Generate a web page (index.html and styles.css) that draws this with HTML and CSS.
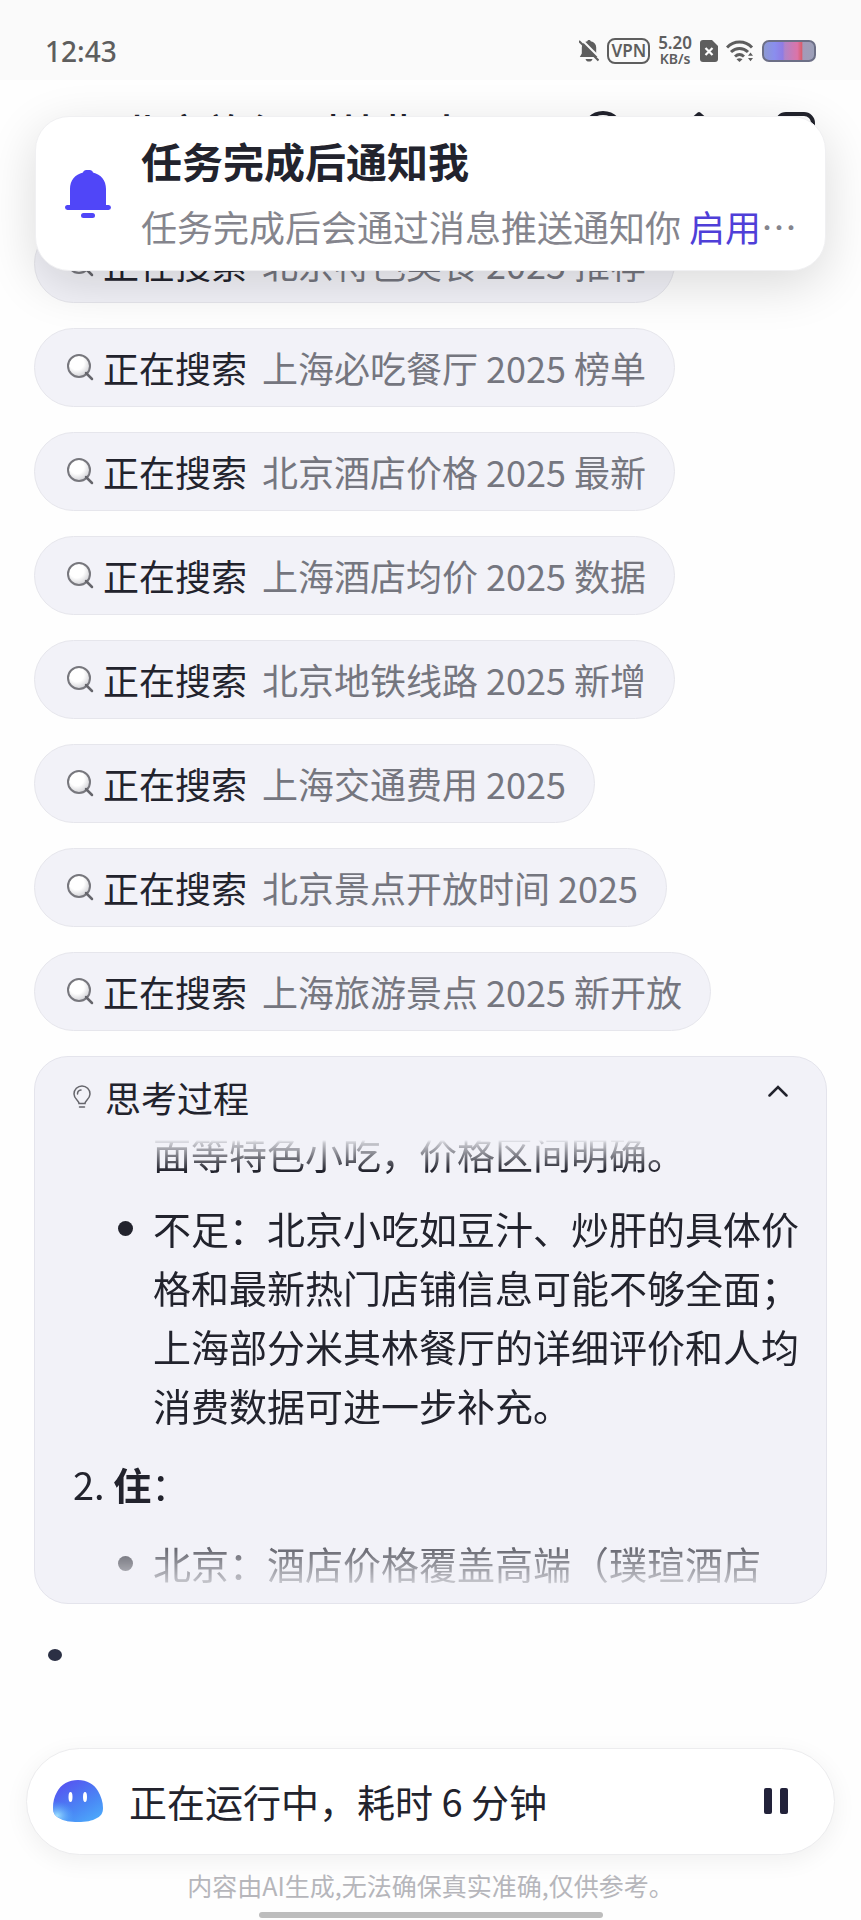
FILE: index.html
```
<!DOCTYPE html>
<html lang="zh-CN">
<head>
    <meta charset="UTF-8">
    <meta name="viewport" content="width=device-width, initial-scale=1.0">
    <title>北京旅行 对比指南</title>
    <link rel="stylesheet" href="styles.css">
</head>
<body>

<!-- shared icon and gradients -->
<svg class="sprite" aria-hidden="true">
    <defs>
        <radialGradient id="lens" cx="0.4" cy="0.35" r="0.65">
            <stop offset="0.5" stop-color="#ffffff"/>
            <stop offset="1" stop-color="#d2d2d6"/>
        </radialGradient>
        <linearGradient id="battery" x1="0" x2="1" y1="0" y2="0">
            <stop offset="0" stop-color="#8c9ad0"/>
            <stop offset="0.22" stop-color="#8a8eee"/>
            <stop offset="0.38" stop-color="#8f7ce4"/>
            <stop offset="0.42" stop-color="#b083c8"/>
            <stop offset="0.66" stop-color="#dc74a8"/>
            <stop offset="0.74" stop-color="#d85f70"/>
            <stop offset="0.77" stop-color="#a59ab8"/>
            <stop offset="1" stop-color="#9aa0b8"/>
        </linearGradient>
        <linearGradient id="face" x1="0" x2="0.7" y1="0" y2="1">
            <stop offset="0" stop-color="#5a48f0"/>
            <stop offset="0.35" stop-color="#5068f2"/>
            <stop offset="0.7" stop-color="#4a88f5"/>
            <stop offset="1" stop-color="#4ca4fa"/>
        </linearGradient>
        <radialGradient id="glow" cx="0.08" cy="0.85" r="0.35">
            <stop offset="0" stop-color="#9fe0ff"/>
            <stop offset="1" stop-color="#4aa8fa" stop-opacity="0"/>
        </radialGradient>
    </defs>
    <symbol id="icon-search" viewBox="0 0 28 28">
        <circle cx="13" cy="13" r="11" fill="url(#lens)" stroke="#77777d" stroke-width="2"/>
        <path d="M20 20l6 6" stroke="#66666c" stroke-width="2.5" stroke-linecap="round"/>
    </symbol>
</svg>

<div class="status-bar">
    <span class="clock">12:43</span>
    <div class="status-icons">
        <svg width="20" height="24" viewBox="0 0 20 24">
            <path d="M10 1c.9 0 1.500.5 1.700 1.200 3.500.7 5.500 3.100 5.500 6.300v6l2 3.500H.8l2-3.500v-6c0-3.200 2-5.600 5.500-6.300C8.500 1.500 9.100 1 10 1zM6.500 20h7c-.4 1.700-1.700 2.600-3.500 2.600S6.900 21.700 6.500 20z" fill="#5e5e5e"/>
            <path d="M2 0l20 20" stroke="#fafafa" stroke-width="2"/>
            <path d="M0 2l19.500 19.500" stroke="#5e5e5e" stroke-width="2"/>
        </svg>
        <span class="vpn">VPN</span>
        <span class="speed"><b>5.20</b><small>KB/s</small></span>
        <svg width="18" height="22" viewBox="0 0 18 22">
            <path d="M3 0h9l6 6v13a3 3 0 0 1-3 3H3a3 3 0 0 1-3-3V3a3 3 0 0 1 3-3z" fill="#5e5e5e"/>
            <path d="M5.500 8l7 7m0-7l-7 7" stroke="#fff" stroke-width="2.200"/>
        </svg>
        <svg width="28" height="22" viewBox="0 0 28 22">
            <g fill="none" stroke="#5e5e5e" stroke-width="3">
                <path d="M1 7.500C8 .2 19 .2 26 7.500"/>
                <path d="M5 12c5-4.800 12-4.800 17 0"/>
                <path d="M9 16.500c2.800-2.500 6.200-2.500 9 0"/>
            </g>
            <path d="M10.500 19.200q3-1.800 6 0L13.500 22zM22 15.800l2.500-3.300 2.500 3.300zM22 18l2.500 3.300L27 18z" fill="#5e5e5e"/>
        </svg>
        <svg width="54" height="22" viewBox="0 0 54 22">
            <rect x="1" y="1" width="52" height="20" rx="6" fill="url(#battery)" stroke="#6c6f86" stroke-width="2"/>
        </svg>
    </div>
</div>

<header class="header">
    <h1 class="header-title">北京旅行 对比指南</h1>
    <div class="header-icons">
        <svg width="44" height="44" viewBox="0 0 44 44" fill="none" stroke="#22232d" stroke-width="4">
            <circle cx="22" cy="22" r="19"/>
            <path d="M22 12v11l7 4"/>
        </svg>
        <svg width="44" height="44" viewBox="0 0 44 44" fill="none" stroke="#22232d" stroke-width="4" stroke-linecap="round" stroke-linejoin="round">
            <path d="M14 11l8-7 8 7M22 5v23M6 24v14h32V24"/>
        </svg>
        <svg width="44" height="44" viewBox="0 0 44 44" fill="none" stroke="#22232d" stroke-width="4">
            <rect x="4" y="4" width="36" height="35" rx="9"/>
            <path d="M14 12v20"/>
        </svg>
    </div>
</header>

<div class="toast">
    <svg class="toast-icon" width="46" height="50" viewBox="0 0 46 50" fill="#5046f8">
        <path d="M18 3.500C18.500 1.500 20 1 23 1s4.500.5 5 2.500C36 5.500 41 11.500 41 20v16h2.500a2.300 2.300 0 0 1 0 5h-41a2.300 2.300 0 0 1 0-5H5V20C5 11.500 10 5.500 18 3.500z"/>
        <rect x="16" y="44" width="14" height="5" rx="2.500"/>
    </svg>
    <div class="toast-text">
        <strong>任务完成后通知我</strong>
        <p>任务完成后会通过消息推送通知你 <a href="#">启用</a>…</p>
    </div>
</div>

<main class="content">
    <ul class="searches">
        <li><svg width="28" height="28"><use href="#icon-search"/></svg><span>正在搜索</span><em>北京特色美食 2025 推荐</em></li>
        <li><svg width="28" height="28"><use href="#icon-search"/></svg><span>正在搜索</span><em>上海必吃餐厅 2025 榜单</em></li>
        <li><svg width="28" height="28"><use href="#icon-search"/></svg><span>正在搜索</span><em>北京酒店价格 2025 最新</em></li>
        <li><svg width="28" height="28"><use href="#icon-search"/></svg><span>正在搜索</span><em>上海酒店均价 2025 数据</em></li>
        <li><svg width="28" height="28"><use href="#icon-search"/></svg><span>正在搜索</span><em>北京地铁线路 2025 新增</em></li>
        <li><svg width="28" height="28"><use href="#icon-search"/></svg><span>正在搜索</span><em>上海交通费用 2025</em></li>
        <li><svg width="28" height="28"><use href="#icon-search"/></svg><span>正在搜索</span><em>北京景点开放时间 2025</em></li>
        <li><svg width="28" height="28"><use href="#icon-search"/></svg><span>正在搜索</span><em>上海旅游景点 2025 新开放</em></li>
    </ul>

    <section class="thinking">
        <div class="thinking-head">
            <svg width="18" height="24" viewBox="0 0 18 24" fill="none" stroke="#66666c" stroke-width="1.500" stroke-linecap="round">
                <path d="M6 18.500c0-3-5-4.500-5-9.500a8 8 0 0 1 16 0c0 5-5 6.500-5 9.500zM6.500 22h5M4.500 9A4 4 0 0 1 8 5"/>
            </svg>
            <h2>思考过程</h2>
            <button class="collapse" aria-label="收起">
                <svg width="20" height="12" viewBox="0 0 20 12" fill="none" stroke="#22232d" stroke-width="2.500" stroke-linecap="round">
                    <path d="M1.500 10.500L10 2l8.500 8.500"/>
                </svg>
            </button>
        </div>
        <div class="thinking-body">
            <ul>
                <li class="rest"><span>面等特色小吃，价格区间明确。</span></li>
                <li><span>不足：北京小吃如豆汁、炒肝的具体价格和最新热门店铺信息可能不够全面；上海部分米其林餐厅的详细评价和人均消费数据可进一步补充。</span></li>
            </ul>
            <ol start="2">
                <li><strong>住</strong>：</li>
            </ol>
            <ul>
                <li><span>北京：酒店价格覆盖高端（璞瑄酒店</span></li>
            </ul>
        </div>
    </section>

    <div class="typing"></div>
</main>

<footer class="footer">
    <div class="runner">
        <svg width="50" height="44" viewBox="0 0 50 44">
            <path d="M25 1c9 0 16 4 20 11 3 5 5 11 5 17 0 5-2 8-6 10-5 3-11 4-19 4s-14-1-19-4c-4-2-6-5-6-10 0-6 1-11 4-16C8 5 16 1 25 1z" fill="url(#face)"/>
            <path d="M25 1c9 0 16 4 20 11 3 5 5 11 5 17 0 5-2 8-6 10-5 3-11 4-19 4s-14-1-19-4c-4-2-6-5-6-10 0-6 1-11 4-16C8 5 16 1 25 1z" fill="url(#glow)"/>
            <ellipse cx="17.500" cy="18" rx="2" ry="5" fill="#fff"/>
            <ellipse cx="32" cy="18" rx="2" ry="5" fill="#fff"/>
        </svg>
        <span class="runner-text">正在运行中，耗时 6 分钟</span>
        <button class="pause" aria-label="暂停">
            <svg width="24" height="26" viewBox="0 0 24 26" fill="#22223a">
                <rect x="0" y="0" width="8" height="26" rx="2"/>
                <rect x="16" y="0" width="8" height="26" rx="2"/>
            </svg>
        </button>
    </div>
    <p class="disclaimer">内容由AI生成,无法确保真实准确,仅供参考。</p>
    <div class="home-bar"></div>
</footer>

</body>
</html>
```

FILE: styles.css
```
* {
    box-sizing: border-box;
    margin: 0;
    padding: 0;
}
body {
    position: relative;
    display: flex;
    flex-direction: column;
    min-height: 100vh;
    font-family: "Noto Sans CJK SC", "Noto Sans", sans-serif;
    color: #22232d;
    background-color: #fefefe;
}
ul, ol {
    list-style: none;
}
button {
    border: none;
    background: none;
    cursor: pointer;
}
svg {
    display: block;
    flex-shrink: 0;
}
.sprite {
    position: absolute;
    width: 0;
    height: 0;
}

/* status */
.status-bar {
    display: flex;
    align-items: center;
    justify-content: space-between;
    height: 80px;
    padding: 22px 45px 0 45px;
    font-family: "Noto Sans", sans-serif;
    color: #5e5e5e;
    background-color: #fafafa;
}
.clock {
    font-size: 28px;
    line-height: 40px;
    font-weight: 500;
}
.status-icons {
    display: flex;
    align-items: center;
    gap: 8px;
}
.vpn {
    padding: 0 2px;
    border: 2px solid #5e5e5e;
    border-radius: 8px;
    font-size: 17px;
    line-height: 22px;
    font-weight: 600;
}
.speed {
    display: flex;
    flex-direction: column;
    align-items: center;
    font-size: 17px;
    line-height: 16px;
}
.speed b {
    font-weight: 600;
}
.speed small {
    font-size: 14px;
    font-weight: 600;
}

/* header */
.header {
    display: flex;
    align-items: center;
    justify-content: space-between;
    height: 104px;
    padding: 0 44px 0 122px;
}
.header-title {
    font-size: 42px;
    line-height: 60px;
    font-weight: 500;
}
.header-icons {
    display: flex;
    gap: 52px;
}

/* toast */
.toast {
    position: absolute;
    top: 116px;
    left: 35px;
    right: 35px;
    z-index: 2;
    display: flex;
    align-items: center;
    gap: 30px;
    height: 155px;
    padding: 0 29px;
    border: 1px solid #f0f0f2;
    border-radius: 34px;
    background-color: #fff;
    box-shadow: 0 14px 50px rgba(0, 0, 0, 0.14);
}
.toast-text {
    flex: 1;
    white-space: nowrap;
}
.toast-text strong {
    display: block;
    font-size: 41px;
    line-height: 60px;
}
.toast-text p {
    padding-top: 4px;
    font-size: 36px;
    line-height: 64px;
    color: #85858d;
}
.toast-text a {
    color: #4f3fd8;
    text-decoration: none;
}

/* list */
.content {
    flex: 1;
    padding: 40px 34px 0;
}
.searches {
    display: flex;
    flex-direction: column;
    align-items: flex-start;
    gap: 25px;
}
.searches li {
    display: flex;
    align-items: center;
    height: 79px;
    padding: 0 28px 2px 31px;
    border: 1px solid #e6e6ec;
    border-radius: 40px;
    background-color: #f2f2f8;
    font-size: 36px;
    line-height: 52px;
}
.searches span {
    margin: 0 15px 0 9px;
}
.searches em {
    font-style: normal;
    color: #75767f;
}

/* thinking */
.thinking {
    margin-top: 25px;
    padding-bottom: 19px;
    border: 1px solid #e4e4ec;
    border-radius: 34px;
    background-color: #f2f2f8;
}
.thinking-head {
    display: flex;
    align-items: center;
    gap: 14px;
    height: 66px;
    padding: 14px 38px 0;
}
.thinking-head h2 {
    flex: 1;
    font-size: 36px;
    line-height: 52px;
    font-weight: 400;
}
.collapse {
    padding-bottom: 12px;
}
.thinking-body {
    height: 461px;
    overflow: hidden;
    padding: 0 22px 0 38px;
    font-size: 38px;
    line-height: 59px;
    -webkit-mask-image: linear-gradient(transparent 17px, rgba(0, 0, 0, 0.2) 20px, #000 48px, #000 400px, rgba(0, 0, 0, 0.2) 461px);
    mask-image: linear-gradient(transparent 17px, rgba(0, 0, 0, 0.2) 20px, #000 48px, #000 400px, rgba(0, 0, 0, 0.2) 461px);
}
.thinking-body ul {
    padding-left: 45px;
}
.thinking-body ul li {
    display: flex;
    gap: 20px;
    margin-bottom: 20px;
}
.thinking-body ul li::before {
    content: "";
    flex-shrink: 0;
    width: 15px;
    height: 15px;
    margin-top: 23px;
    border-radius: 50%;
    background-color: #22232d;
}
.thinking-body ul .rest {
    margin-bottom: 16px;
}
.thinking-body .rest::before {
    visibility: hidden;
}
.thinking-body ol {
    margin-bottom: 20px;
    list-style: decimal inside;
}

.typing {
    width: 14px;
    height: 12px;
    margin: 45px 14px;
    border-radius: 50%;
    background-color: #2b3044;
}

/* footer */
.footer {
    display: flex;
    flex-direction: column;
    padding: 36px 26px 2px;
}
.runner {
    display: flex;
    align-items: center;
    height: 107px;
    padding: 0 46px 2px 26px;
    border: 1px solid #ececee;
    border-radius: 54px;
    background-color: #fff;
    box-shadow: 0 6px 24px rgba(0, 0, 0, 0.06);
}
.runner-text {
    flex: 1;
    margin-left: 26px;
    font-size: 38px;
    line-height: 56px;
}
.disclaimer {
    margin-top: 12px;
    font-size: 25px;
    line-height: 36px;
    text-align: center;
    color: #b6b6bb;
}
.home-bar {
    align-self: center;
    width: 344px;
    height: 6px;
    margin-top: 9px;
    border-radius: 3px;
    background-color: #bdbdbd;
}
```
